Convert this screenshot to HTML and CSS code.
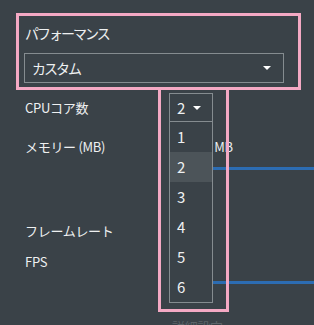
FILE: index.html
```html
<!DOCTYPE html>
<html lang="ja">
<head>
    <meta charset="UTF-8">
    <meta name="viewport" content="width=device-width, initial-scale=1.0">
    <title>パフォーマンス設定</title>
    <link rel="stylesheet" href="styles.css">
</head>
<body>
    <div class="preset">
        <div class="preset-title">パフォーマンス</div>
        <div class="preset-select">
            <span>カスタム</span>
            <span class="arrow"></span>
        </div>
    </div>

    <div class="settings">
        <div class="row row-cpu">
            <div class="label">CPUコア数</div>
            <div class="cpu-select">
                <span>2</span>
                <span class="arrow"></span>
            </div>
        </div>
        <div class="row row-memory">
            <div class="label">メモリー (MB)</div>
            <div class="value">4096 MB</div>
            <div class="track"></div>
        </div>
        <div class="row row-fps">
            <div class="label">フレームレート</div>
            <div class="label sub">FPS</div>
            <div class="track"></div>
        </div>
        <div class="row row-next">
            <div></div>
            <div class="dim">詳細設定</div>
        </div>
    </div>

    <ul class="cpu-options">
        <li>1</li>
        <li class="selected">2</li>
        <li>3</li>
        <li>4</li>
        <li>5</li>
        <li>6</li>
    </ul>
    <div class="focus-ring"></div>
</body>
</html>
```

FILE: styles.css
```css
body {
    margin: 0;
    background-color: #3a4248;
    color: #eef0f1;
    font-family: "Noto Sans CJK JP", "Noto Sans", sans-serif;
    font-size: 13px;
    letter-spacing: -0.3px;
    height: 325px;
    overflow: hidden;
}
.preset {
    box-sizing: border-box;
    width: 285px;
    margin: 13px 0 0 16px;
    padding: 7px 14px 4px 5px;
    border: 3px solid #f4a9c4;
}
.preset-title {
    line-height: 20px;
    height: 20px;
    font-size: 14px;
    letter-spacing: -2px;
    padding-left: 1px;
}
.preset-select {
    box-sizing: border-box;
    height: 30px;
    margin-top: 10px;
    border: 1px solid #858c90;
    padding: 0 12px 0 7px;
    display: flex;
    align-items: center;
    justify-content: space-between;
    font-size: 14px;
    letter-spacing: -2px;
}
.arrow {
    width: 0;
    height: 0;
    border-left: 4px solid transparent;
    border-right: 4px solid transparent;
    border-top: 4px solid #ffffff;
}
.settings {
    padding-left: 25px;
}
.row {
    display: grid;
    grid-template-columns: 144px 1fr;
    align-items: center;
}
.row-cpu {
    margin-top: 3px;
}
.label {
    line-height: 20px;
}
.cpu-select {
    box-sizing: border-box;
    width: 44px;
    height: 29px;
    border: 1px solid #858c90;
    padding-left: 7px;
    display: flex;
    align-items: center;
    gap: 8px;
    font-size: 15px;
}
.cpu-select .arrow {
    margin-top: 1px;
}
.row-memory {
    margin-top: 15px;
    grid-template-rows: 20px 13px;
}
.value {
    padding-left: 15px;
    line-height: 20px;
}
.track {
    grid-column: 2;
    height: 3px;
    background-color: #2c6cb2;
    align-self: end;
}
.row-fps {
    margin-top: 51px;
    grid-template-rows: 20px 11px 20px 12px;
}
.row-fps .label:first-child {
    grid-row: 1;
}
.row-fps .sub {
    grid-column: 1;
    grid-row: 3;
}
.row-fps .track {
    grid-row: 4;
}
.row-next {
    margin-top: 33px;
}
.dim {
    color: #5c6469;
    padding-left: 3px;
    line-height: 20px;
}
.cpu-options {
    position: absolute;
    left: 169px;
    top: 121px;
    box-sizing: border-box;
    width: 44px;
    height: 182px;
    margin: 0;
    padding: 0;
    list-style: none;
    background-color: #3a4248;
    border: 1px solid #858c90;
    font-size: 15px;
}
.cpu-options li {
    height: 30px;
    line-height: 30px;
    padding-left: 7px;
}
.cpu-options .selected {
    background-color: #4c5459;
}
.focus-ring {
    position: absolute;
    left: 158px;
    top: 87px;
    box-sizing: border-box;
    width: 71px;
    height: 225px;
    border: 3px solid #f4a9c4;
}
```
